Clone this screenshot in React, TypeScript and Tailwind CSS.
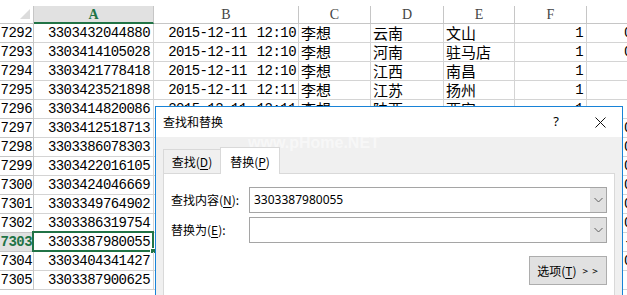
import React from "react";

const rows: { n: string; a: string; b: string; c: string; d: string; e: string; f: string; g: string }[] = [
  { n: "7292", a: "3303432044880", b: "2015-12-11 12:10", c: "李想", d: "云南", e: "文山", f: "1", g: "0" },
  { n: "7293", a: "3303414105028", b: "2015-12-11 12:10", c: "李想", d: "河南", e: "驻马店", f: "1", g: "0" },
  { n: "7294", a: "3303421778418", b: "2015-12-11 12:10", c: "李想", d: "江西", e: "南昌", f: "1", g: "" },
  { n: "7295", a: "3303423521898", b: "2015-12-11 12:11", c: "李想", d: "江苏", e: "扬州", f: "1", g: "" },
  { n: "7296", a: "3303414820086", b: "2015-12-11 12:11", c: "李想", d: "陕西", e: "西安", f: "1", g: "" },
  { n: "7297", a: "3303412518713", b: "2015-12-11 12:11", c: "李想", d: "云南", e: "文山", f: "1", g: "0" },
  { n: "7298", a: "3303386078303", b: "2015-12-11 12:11", c: "李想", d: "河南", e: "南阳", f: "1", g: "0" },
  { n: "7299", a: "3303422016105", b: "2015-12-11 12:12", c: "李想", d: "江西", e: "南昌", f: "1", g: "0" },
  { n: "7300", a: "3303424046669", b: "2015-12-11 12:12", c: "李想", d: "江苏", e: "扬州", f: "1", g: "0" },
  { n: "7301", a: "3303349764902", b: "2015-12-11 12:12", c: "李想", d: "陕西", e: "西安", f: "1", g: "0" },
  { n: "7302", a: "3303386319754", b: "2015-12-11 12:12", c: "李想", d: "云南", e: "文山", f: "1", g: "0" },
  { n: "7303", a: "3303387980055", b: "2015-12-11 12:13", c: "李想", d: "河南", e: "南阳", f: "1", g: "-" },
  { n: "7304", a: "3303404341427", b: "2015-12-11 12:13", c: "李想", d: "江西", e: "南昌", f: "1", g: "0" },
  { n: "7305", a: "3303387900625", b: "2015-12-11 12:13", c: "李想", d: "江苏", e: "扬州", f: "1", g: "" },
];

const mono = "font-['Liberation_Mono',monospace] text-[14px] tracking-[-0.55px] text-black";
const cjk = "font-['Noto_Sans_CJK_SC',sans-serif] text-[15px] text-black";
const ui = "font-['Noto_Sans_CJK_SC',sans-serif] text-[12px] text-black";

function U({ c }: { c: string }) {
  return <span className="underline underline-offset-2">{c}</span>;
}

function Chevron() {
  return (
    <svg width="9" height="6" viewBox="0 0 9 6">
      <path d="M0.5 1 L4.5 5 L8.5 1" fill="none" stroke="#606060" strokeWidth="1" />
    </svg>
  );
}

function Combo({ value }: { value: string }) {
  return (
    <div className="flex h-[26px] flex-1 border border-[#a5a5a5] bg-white">
      <div className="flex flex-1 items-center pl-[4px] font-['Noto_Sans',sans-serif] text-[12px] text-black">{value}</div>
      <div className="flex w-[16px] items-center justify-center bg-[#e1e1e1]">
        <Chevron />
      </div>
    </div>
  );
}

export default function App() {
  return (
    <div className="relative h-[295px] w-[627px] overflow-hidden bg-white">
      {/* spreadsheet */}
      <div className="flex flex-col">
        <div className="h-[6px]" />
        <div className="flex h-[18px]">
          <div className="relative w-[34px] shrink-0 border-r border-b border-[#c6c6c6] bg-white">
            <svg className="absolute left-[20px] top-[3px]" width="10" height="10" viewBox="0 0 10 10">
              <path d="M10 0 L10 10 L0 10 Z" fill="#dcdcdc" />
            </svg>
          </div>
          <div className="flex w-[120px] shrink-0 items-center justify-center border-r border-b-2 border-r-[#c6c6c6] border-b-[#217346] bg-[#e1e1e1] font-['Liberation_Serif',serif] text-[14px] font-bold text-[#217346]">
            A
          </div>
          {[
            ["B", "w-[145px]"],
            ["C", "w-[72px]"],
            ["D", "w-[73px]"],
            ["E", "w-[71px]"],
            ["F", "w-[72px]"],
          ].map(([l, w]) => (
            <div
              key={l}
              className={`flex ${w} shrink-0 items-center justify-center border-r border-b border-[#c6c6c6] bg-white font-['Liberation_Serif',serif] text-[14px] text-[#444]`}
            >
              {l}
            </div>
          ))}
          <div className="flex flex-1 items-center border-b border-[#c6c6c6] bg-white pl-[72px] font-['Liberation_Serif',serif] text-[14px] text-[#444]">
            G
          </div>
        </div>
        {rows.map((r) => {
          const sel = r.n === "7303";
          const [date, time] = r.b.split(" ");
          return (
            <div key={r.n} className="flex h-[19px]">
              <div
                className={`flex w-[34px] shrink-0 items-center justify-end overflow-hidden border-r border-b border-[#c6c6c6] pr-[1px] ${
                  sel ? "bg-[#e1e1e1] font-bold text-[#217346]" : "bg-white"
                }`}
              >
                <span className={`${mono} whitespace-nowrap ${sel ? "!text-[#217346] font-bold" : ""}`}>{r.n}</span>
              </div>
              <div className="relative flex w-[120px] shrink-0 items-center justify-end border-r border-b border-[#d4d4d4] pr-[3px]">
                <span className={mono}>{r.a}</span>
                {sel && (
                  <div className="absolute -left-[2px] -top-[2px] -right-[1px] -bottom-[1px] border-2 border-[#217346]">
                    <div className="absolute -right-[4px] -bottom-[4px] h-[6px] w-[6px] border border-white bg-[#217346]" />
                  </div>
                )}
              </div>
              <div className="flex w-[145px] shrink-0 items-center justify-end gap-[10px] whitespace-nowrap border-r border-b border-[#d4d4d4] pr-[2px]">
                <span className={mono}>{date}</span>
                <span className={mono}>{time}</span>
              </div>
              <div className="flex w-[72px] shrink-0 items-center border-r border-b border-[#d4d4d4] pl-[2px]">
                <span className={cjk}>{r.c}</span>
              </div>
              <div className="flex w-[73px] shrink-0 items-center border-r border-b border-[#d4d4d4] pl-[2px]">
                <span className={cjk}>{r.d}</span>
              </div>
              <div className="flex w-[71px] shrink-0 items-center border-r border-b border-[#d4d4d4] pl-[2px]">
                <span className={cjk}>{r.e}</span>
              </div>
              <div className="flex w-[72px] shrink-0 items-center justify-end border-r border-b border-[#d4d4d4] pr-[3px]">
                <span className={mono}>{r.f}</span>
              </div>
              <div className="flex flex-1 items-center overflow-hidden whitespace-nowrap border-b border-[#d4d4d4] pl-[37px]">
                <span className={mono}>{r.g}</span>
              </div>
            </div>
          );
        })}
      </div>

      {/* dialog */}
      <div className="absolute left-[155px] top-[106px] flex h-[200px] w-[468px] flex-col border border-[#1883d7] bg-[#f0f0f0]">
        <div className="flex h-[30px] items-center bg-white pl-[7px]">
          <span className={ui}>查找和替换</span>
          <span className="ml-auto mr-[36px] font-['Noto_Sans',sans-serif] text-[13px] text-black">?</span>
          <svg className="mr-[16px]" width="11" height="11" viewBox="0 0 11 11">
            <path d="M0.5 0.5 L10.5 10.5 M10.5 0.5 L0.5 10.5" stroke="#111" strokeWidth="1" />
          </svg>
        </div>
        <div className="pointer-events-none absolute left-[92px] top-[24px] font-['Liberation_Sans',sans-serif] text-[16px] font-bold text-white/50">
          www.pHome.NET
        </div>
        <div className="flex flex-1 flex-col px-[7px] pt-[10px]">
          <div className="flex items-end">
            <div className={`flex h-[24px] w-[57px] items-center justify-center border-t border-l border-[#d9d9d9] bg-[#f0f0f0] ${ui}`}>
              查找(<U c="D" />)
            </div>
            <div
              className={`relative -mb-[1px] flex h-[27px] w-[60px] items-center justify-center border-x border-t border-[#d9d9d9] bg-white pt-[2px] ${ui}`}
            >
              替换(<U c="P" />)
            </div>
          </div>
          <div className="flex flex-1 flex-col border border-[#d9d9d9] bg-white pl-[7px] pr-[7px] pt-[13px]">
            <div className="flex items-center">
              <div className={`w-[78px] ${ui}`}>
                查找内容(<U c="N" />):
              </div>
              <Combo value="3303387980055" />
            </div>
            <div className="mt-[4px] flex items-center">
              <div className={`w-[78px] ${ui}`}>
                替换为(<U c="E" />):
              </div>
              <Combo value="" />
            </div>
            <div className="mt-[13px] flex justify-end">
              <div className={`flex h-[29px] w-[78px] items-center justify-center gap-[6px] border border-[#adadad] bg-[#e1e1e1] ${ui}`}>
                <span>
                  选项(<U c="T" />)
                </span>
                <span className="text-[10px] tracking-[1px]">&gt; &gt;</span>
              </div>
            </div>
          </div>
        </div>
      </div>
    </div>
  );
}
